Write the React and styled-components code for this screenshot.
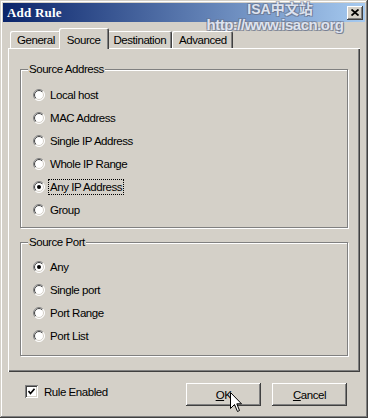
import React from "react";
import styled, { createGlobalStyle } from "styled-components";

const GlobalStyle = createGlobalStyle`
  html, body {
    margin: 0;
    padding: 0;
    background: #d4d0c8;
  }
  body {
    font-family: "Liberation Sans", Arial, sans-serif;
    font-size: 11.5px;
    letter-spacing: -0.45px;
    color: #000;
  }
`;

const Window = styled.div`
  position: relative;
  box-sizing: border-box;
  width: 368px;
  height: 418px;
  padding: 3px;
  display: flex;
  flex-direction: column;
  background: #d4d0c8;
  overflow: hidden;
  box-shadow: inset -1px -1px #404040, inset 1px 1px #d4d0c8,
    inset -2px -2px #808080, inset 2px 2px #fff;
`;

const TitleBar = styled.div`
  height: 19px;
  display: flex;
  align-items: center;
  justify-content: space-between;
  padding: 0 2px 0 4px;
  background: linear-gradient(to right, #0a246a, #a6caf0);
`;

const Title = styled.div`
  font-family: "Liberation Serif", "Times New Roman", serif;
  font-weight: bold;
  font-size: 13px;
  letter-spacing: 0.2px;
  color: #fff;
`;

const CloseButton = styled.div`
  width: 16px;
  height: 14px;
  display: flex;
  align-items: center;
  justify-content: center;
  background: #d4d0c8;
  box-shadow: inset -1px -1px #404040, inset 1px 1px #fff,
    inset -2px -2px #808080;
`;

const Body = styled.div`
  flex: 1;
  display: flex;
  flex-direction: column;
  padding: 6px 5px 0 5px;
`;

const TabRow = styled.div`
  position: relative;
  z-index: 1;
  height: 20px;
  display: flex;
  align-items: flex-end;
  padding-left: 2px;
`;

const Tab = styled.div`
  position: relative;
  box-sizing: border-box;
  height: ${(p) => (p.$active ? "21px" : "17px")};
  margin: ${(p) => (p.$active ? "0 -2px -1px" : "0")};
  padding: ${(p) => (p.$active ? "2px 8px 0" : "1px 6px 0 7px")};
  display: flex;
  align-items: center;
  background: #d4d0c8;
  border-radius: 2px 2px 0 0;
  box-shadow: inset 1px 1px #fff, inset -1px 0 #404040, inset -2px 0 #808080;
  z-index: ${(p) => (p.$active ? 2 : 1)};
`;

const Panel = styled.div`
  box-sizing: border-box;
  height: 324px;
  padding: 21px 12px 0 12px;
  display: flex;
  flex-direction: column;
  box-shadow: inset 1px 1px #fff, inset -1px -1px #404040,
    inset -2px -2px #808080;
`;

const Group = styled.div`
  position: relative;
  margin-top: ${(p) => p.$gap || 0}px;
  padding: ${(p) => p.$pad};
  border: 1px solid #808080;
  box-shadow: inset 1px 1px #fff, 1px 1px #fff;
  display: flex;
  flex-direction: column;
`;

const GroupTitle = styled.span`
  position: absolute;
  top: -7px;
  left: 7px;
  padding: 0 1px;
  line-height: 13px;
  background: #d4d0c8;
`;

const OptionRow = styled.div`
  height: 23px;
  display: flex;
  align-items: center;
  padding-left: 12px;
  gap: 4px;
`;

const OptionLabel = styled.span`
  padding: 0 1px;
  line-height: 14px;
  outline: ${(p) => (p.$focus ? "1px dotted #000" : "none")};
`;

const Footer = styled.div`
  flex: 1;
  display: flex;
  align-items: flex-start;
  justify-content: space-between;
  padding: 11px 13px 0 17px;
`;

const CheckRow = styled.div`
  display: flex;
  align-items: center;
  gap: 6px;
  margin-top: 2px;
`;

const CheckBox = styled.div`
  width: 13px;
  height: 13px;
  box-sizing: border-box;
  background: #fff;
  display: flex;
  align-items: center;
  justify-content: center;
  box-shadow: inset 1px 1px #808080, inset -1px -1px #fff,
    inset 2px 2px #404040, inset -2px -2px #d4d0c8;
`;

const Buttons = styled.div`
  display: flex;
  gap: 11px;
`;

const Button = styled.div`
  width: 75px;
  height: 23px;
  display: flex;
  align-items: center;
  justify-content: center;
  background: #d4d0c8;
  box-shadow: inset -1px -1px #404040, inset 1px 1px #fff,
    inset -2px -2px #808080;
`;

const Key = styled.span`
  text-decoration: underline;
`;

const Watermark = styled.div`
  position: absolute;
  top: 1px;
  left: 206px;
  width: 138px;
  display: flex;
  flex-direction: column;
  align-items: center;
  font-family: "Liberation Sans", "Noto Sans CJK SC", sans-serif;
  font-weight: 700;
  color: rgba(228, 234, 246, 0.95);
  text-shadow: 1px 1px 0 rgba(105, 115, 138, 0.75),
    -1px -1px 0 rgba(105, 115, 138, 0.55), 1px -1px 0 rgba(105, 115, 138, 0.55),
    -1px 1px 0 rgba(105, 115, 138, 0.55);
  pointer-events: none;
  letter-spacing: 0;
`;

const MarkTop = styled.div`
  font-size: 14px;
  line-height: 16px;
  margin-left: 10px;
`;

const MarkUrl = styled.div`
  font-family: "Liberation Sans", Arial, sans-serif;
  font-weight: 700;
  font-size: 15px;
  line-height: 16px;
  letter-spacing: -0.5px;
`;

const Pointer = styled.svg`
  position: absolute;
  left: 230px;
  top: 392px;
`;

const Radio = ({ checked }) => (
  <svg width="12" height="12" viewBox="0 0 12 12">
    <defs>
      <linearGradient id="ro" x1="0" y1="0" x2="1" y2="1">
        <stop offset="0.5" stopColor="#808080" />
        <stop offset="0.5" stopColor="#ffffff" />
      </linearGradient>
      <linearGradient id="ri" x1="0" y1="0" x2="1" y2="1">
        <stop offset="0.5" stopColor="#404040" />
        <stop offset="0.5" stopColor="#d4d0c8" />
      </linearGradient>
    </defs>
    <circle cx="6" cy="6" r="5.5" fill="#fff" stroke="url(#ro)" strokeWidth="1" />
    <circle cx="6" cy="6" r="4.5" fill="#fff" stroke="url(#ri)" strokeWidth="1" />
    {checked && <circle cx="6" cy="6" r="2" fill="#000" />}
  </svg>
);

const addressOptions = [
  "Local host",
  "MAC Address",
  "Single IP Address",
  "Whole IP Range",
  "Any IP Address",
  "Group",
];
const portOptions = ["Any", "Single port", "Port Range", "Port List"];

const tabs = ["General", "Source", "Destination", "Advanced"];

const App = () => {
  return (
    <>
      <GlobalStyle />
      <Window>
        <TitleBar>
          <Title>Add Rule</Title>
          <CloseButton>
            <svg width="8" height="7" viewBox="0 0 8 7">
              <path d="M0.5 0.5 L7.5 6.5 M7.5 0.5 L0.5 6.5" stroke="#000" strokeWidth="1.8" />
            </svg>
          </CloseButton>
        </TitleBar>
        <Body>
          <TabRow>
            {tabs.map((t) => (
              <Tab key={t} $active={t === "Source"}>
                {t}
              </Tab>
            ))}
          </TabRow>
          <Panel>
            <Group $pad="13px 0 6px 0">
              <GroupTitle>Source Address</GroupTitle>
              {addressOptions.map((o) => (
                <OptionRow key={o}>
                  <Radio checked={o === "Any IP Address"} />
                  <OptionLabel $focus={o === "Any IP Address"}>{o}</OptionLabel>
                </OptionRow>
              ))}
            </Group>
            <Group $gap={14} $pad="12px 0 8px 0">
              <GroupTitle>Source Port</GroupTitle>
              {portOptions.map((o) => (
                <OptionRow key={o}>
                  <Radio checked={o === "Any"} />
                  <OptionLabel>{o}</OptionLabel>
                </OptionRow>
              ))}
            </Group>
          </Panel>
          <Footer>
            <CheckRow>
              <CheckBox>
                <svg width="7" height="7" viewBox="0 0 7 7">
                  <path d="M0.5 3 L2.5 5.5 L6.5 0.8" stroke="#000" strokeWidth="1.6" fill="none" />
                </svg>
              </CheckBox>
              <span>Rule Enabled</span>
            </CheckRow>
            <Buttons>
              <Button>
                <span>
                  <Key>O</Key>K
                </span>
              </Button>
              <Button>
                <span>
                  <Key>C</Key>ancel
                </span>
              </Button>
            </Buttons>
          </Footer>
        </Body>
        <Watermark>
          <MarkTop>ISA中文站</MarkTop>
          <MarkUrl>http://www.isacn.org</MarkUrl>
        </Watermark>
        <Pointer width="13" height="21" viewBox="0 0 13 21">
          <path
            d="M0.5 0.5 L0.5 16.5 L4.5 12.5 L7.5 19.5 L9.5 18.5 L6.8 11.8 L11.5 11.8 Z"
            fill="#fff"
            stroke="#000"
            strokeWidth="1"
          />
        </Pointer>
      </Window>
    </>
  );
};

export default App;
